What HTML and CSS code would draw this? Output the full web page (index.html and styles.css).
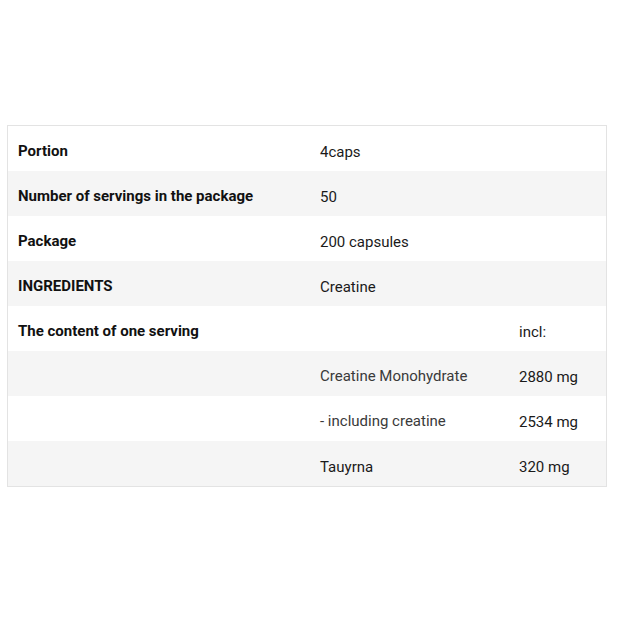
FILE: index.html
```html
<!DOCTYPE html>
<html>
<head>
<meta charset="utf-8">
<link rel="stylesheet" href="styles.css">
</head>
<body>
<div class="page">
  <div class="table">
    <div class="row">
      <div class="cell label">Portion</div>
      <div class="cell value span2">4caps</div>
    </div>
    <div class="row alt">
      <div class="cell label">Number of servings in the package</div>
      <div class="cell value span2">50</div>
    </div>
    <div class="row">
      <div class="cell label">Package</div>
      <div class="cell value span2">200 capsules</div>
    </div>
    <div class="row alt">
      <div class="cell label">INGREDIENTS</div>
      <div class="cell value span2">Creatine</div>
    </div>
    <div class="row">
      <div class="cell label">The content of one serving</div>
      <div class="cell value"></div>
      <div class="cell value">incl:</div>
    </div>
    <div class="row alt">
      <div class="cell label"></div>
      <div class="cell value sub">Creatine Monohydrate</div>
      <div class="cell value">2880 mg</div>
    </div>
    <div class="row">
      <div class="cell label"></div>
      <div class="cell value sub">- including creatine</div>
      <div class="cell value">2534 mg</div>
    </div>
    <div class="row alt">
      <div class="cell label"></div>
      <div class="cell value">Tauyrna</div>
      <div class="cell value">320 mg</div>
    </div>
  </div>
</div>
</body>
</html>
```

FILE: styles.css
```css
html, body {
  margin: 0;
  padding: 0;
  background: #ffffff;
}
.page {
  padding: 125px 0 0 7px;
}
.table {
  width: 598px;
  border: 1px solid #e3e3e3;
  font-family: Roboto, "Liberation Sans", sans-serif;
  color: #1a1a1a;
}
.row {
  display: grid;
  grid-template-columns: 302px 199px 97px;
  height: 45px;
  background: #ffffff;
}
.row.alt {
  background: #f5f5f5;
}
.cell {
  padding: 0 10px;
  display: flex;
  align-items: center;
  font-size: 15px;
  white-space: nowrap;
}
.label {
  font-weight: 700;
  color: #111111;
  padding-top: 4px;
}
.value {
  font-weight: 400;
  padding-top: 6px;
  color: #1a1a1a;
}
.value.sub {
  color: #3a3a3a;
  padding-top: 4px;
}
.span2 {
  grid-column: 2 / 4;
}
```
